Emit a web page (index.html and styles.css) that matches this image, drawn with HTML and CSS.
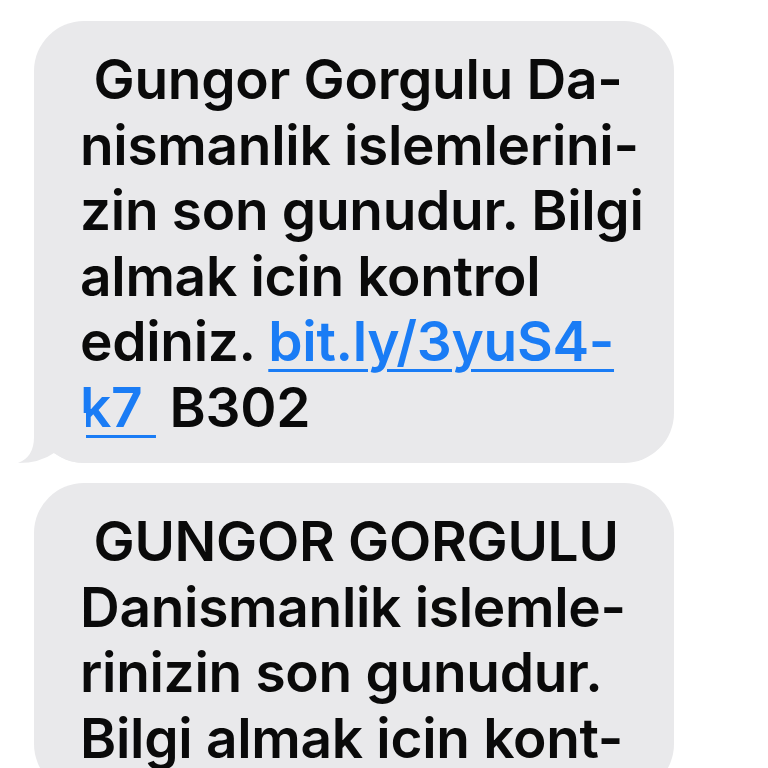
FILE: index.html
```html
<!DOCTYPE html>
<html>
<head>
<meta charset="utf-8">
<link rel="stylesheet" href="styles.css">
</head>
<body>
<div class="thread">
  <div class="bubble has-tail">
    <p class="msg"><span class="line">&nbsp;Gungor Gorgulu Da-</span><span class="line">nismanlik islemlerini-</span><span class="line">zin son gunudur. Bilgi</span><span class="line">almak icin kontrol</span><span class="line">ediniz. <a class="link" href="#">bit.ly/3yuS4-</a></span><span class="line"><a class="link" href="#">k7&nbsp;</a>&nbsp;B302</span></p>
    <svg class="tail" width="72" height="50" viewBox="0 0 72 50"><path d="M20 0 L20 24 Q20 44 4 50 Q26 50 40 40 Q54 50 72 50 L72 0 Z" fill="#e9e9eb"/></svg>
  </div>
  <div class="bubble">
    <p class="msg"><span class="line">&nbsp;GUNGOR GORGULU</span><span class="line">Danismanlik islemle-</span><span class="line">rinizin son gunudur.</span><span class="line">Bilgi almak icin kont-</span></p>
  </div>
</div>
</body>
</html>
```
FILE: styles.css
```css
html, body {
  margin: 0;
  padding: 0;
  background: #ffffff;
  overflow: hidden;
  height: 768px;
}
.thread {
  display: flex;
  flex-direction: column;
  gap: 20px;
  padding: 21px 0 0 34px;
}
.bubble {
  position: relative;
  width: 640px;
  box-sizing: border-box;
  background: #e9e9eb;
  border-radius: 50px;
  padding: 26px 20px 23px 46px;
}
.msg {
  margin: 0;
  font-family: Inter, "Liberation Sans", sans-serif;
  font-weight: 600;
  font-size: 55px;
  letter-spacing: -0.3px;
  line-height: 65.5px;
  color: #0a0a0a;
}
.line {
  display: block;
  white-space: nowrap;
}
.link {
  color: #1a7cf5;
  text-decoration: underline;
  text-decoration-thickness: 3px;
  text-underline-offset: 8px;
}
.tail {
  position: absolute;
  left: -20px;
  bottom: 0;
  display: block;
}
```
